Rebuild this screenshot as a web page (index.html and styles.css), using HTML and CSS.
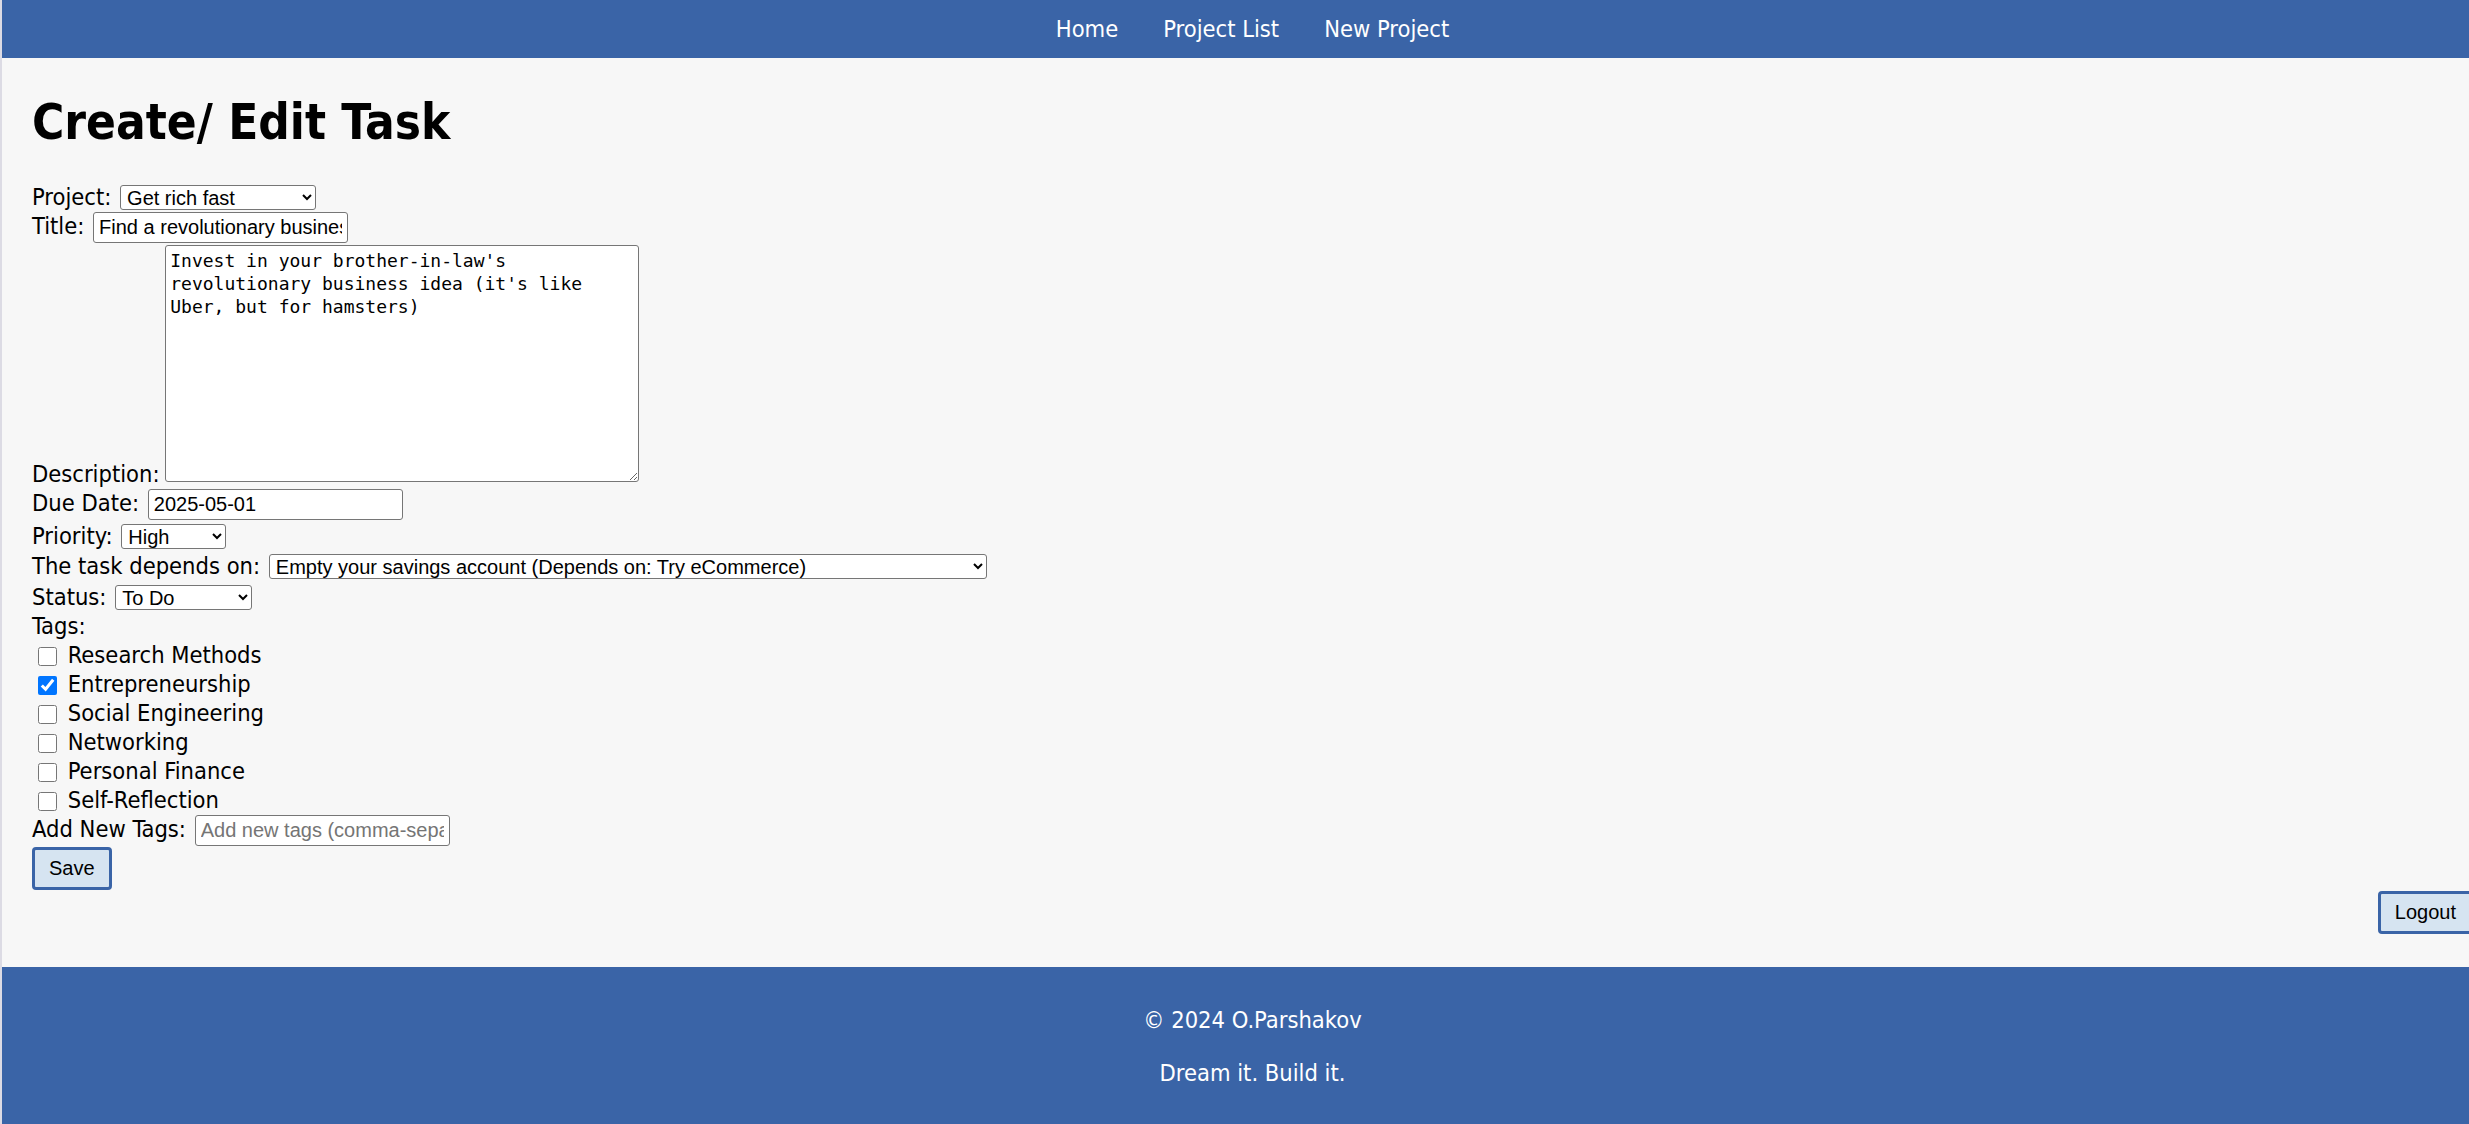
FILE: index.html
```html
<!DOCTYPE html>
<html lang="en">
<head>
<meta charset="utf-8">
<title>Create/ Edit Task</title>
<link rel="stylesheet" href="styles.css">
</head>
<body>
<div class="page">
  <header class="topbar">
    <nav>
      <ul class="nav">
        <li><a href="#">Home</a></li>
        <li><a href="#">Project List</a></li>
        <li><a href="#">New Project</a></li>
      </ul>
    </nav>
  </header>

  <main class="content">
    <h1 class="title">Create/ Edit Task</h1>
    <form class="task-form">
      <div class="row">
        <label>Project:</label>
        <select class="sel sel-project"><option>Get rich fast</option></select>
      </div>
      <div class="row">
        <label>Title:</label>
        <input class="field" type="text" value="Find a revolutionary business idea">
      </div>
      <div class="row">
        <label class="tight">Description:</label>
        <textarea class="desc">Invest in your brother-in-law's revolutionary business idea (it's like Uber, but for hamsters)</textarea>
      </div>
      <div class="row spaced">
        <label>Due Date:</label>
        <input class="field" type="text" value="2025-05-01">
      </div>
      <div class="row spaced">
        <label>Priority:</label>
        <select class="sel sel-priority"><option>High</option></select>
      </div>
      <div class="row spaced">
        <label>The task depends on:</label>
        <select class="sel sel-depends"><option>Empty your savings account (Depends on: Try eCommerce)</option></select>
      </div>
      <div class="row">
        <label>Status:</label>
        <select class="sel sel-status"><option>To Do</option></select>
      </div>
      <div class="row">Tags:</div>
      <div class="row"><input class="check" type="checkbox"> Research Methods</div>
      <div class="row"><input class="check" type="checkbox" checked> Entrepreneurship</div>
      <div class="row"><input class="check" type="checkbox"> Social Engineering</div>
      <div class="row"><input class="check" type="checkbox"> Networking</div>
      <div class="row"><input class="check" type="checkbox"> Personal Finance</div>
      <div class="row"><input class="check" type="checkbox"> Self-Reflection</div>
      <div class="row">
        <label>Add New Tags:</label>
        <input class="field" type="text" placeholder="Add new tags (comma-separated)">
      </div>
      <button class="btn" type="button">Save</button>
    </form>
    <div class="logout-wrap">
      <button class="btn" type="button">Logout</button>
    </div>
  </main>

  <footer class="footer">
    <p>&copy; 2024 O.Parshakov</p>
    <p>Dream it. Build it.</p>
  </footer>
</div>
</body>
</html>
```

FILE: styles.css
```css
html, body {
  margin: 0;
  padding: 0;
  background: #f7f7f7;
  overflow: hidden;
}

.page {
  box-sizing: border-box;
  width: 2503px;
  border-left: 2px solid #dcdbe4;
  font-family: "DejaVu Sans Condensed", "DejaVu Sans", sans-serif;
  font-size: 23.5px;
  color: #000;
}

.topbar {
  background: #3a64a7;
  height: 58px;
  display: flex;
  align-items: center;
  justify-content: center;
}

.nav {
  list-style: none;
  margin: 0;
  padding: 0;
  display: flex;
  gap: 45px;
  line-height: 29px;
}

.nav a {
  color: #fff;
  text-decoration: none;
}

.content {
  padding: 37px 30px 33px;
}

.title {
  margin: 0 0 32px;
  font-size: 49px;
  font-weight: bold;
  line-height: 56px;
}

.row {
  line-height: 29px;
}

.row label {
  margin-right: 2px;
}

.row label.tight {
  margin-right: -1px;
}

.row.spaced {
  padding-bottom: 1.5px;
}

.sel {
  font: 20px "Liberation Sans", Arial, sans-serif;
  height: 25px;
  box-sizing: border-box;
  border: 1px solid #767676;
  border-radius: 3px;
  background: #fff;
  color: #000;
  padding: 0 2px;
  margin: 0;
}

.sel-project { width: 196px; }
.sel-priority { width: 105px; }
.sel-depends { width: 718px; }
.sel-status { width: 137px; }

.field {
  font: 20px "Liberation Sans", Arial, sans-serif;
  width: 255px;
  height: 31px;
  box-sizing: border-box;
  border: 1px solid #767676;
  border-radius: 3px;
  background: #fff;
  color: #000;
  padding: 1px 5px;
  margin: 0;
}

.field::placeholder {
  color: #757575;
}

.desc {
  font: 18px "DejaVu Sans Mono", monospace;
  line-height: 23px;
  width: 474px;
  height: 237px;
  box-sizing: border-box;
  border: 1px solid #767676;
  border-radius: 3px;
  background: #fff;
  color: #000;
  padding: 3px 4px;
  margin: 2px 0 0;
  resize: both;
}

.check {
  width: 19px;
  height: 19px;
  margin: 4px 4px 4px 6px;
  vertical-align: middle;
}

.btn {
  display: block;
  font: 20px "Liberation Sans", Arial, sans-serif;
  line-height: 24px;
  padding: 6.5px 14px;
  background: #d6e4f1;
  border: 3px solid #3a64a7;
  border-radius: 4px;
  color: #000;
  margin: 1px 0 0;
}

.logout-wrap {
  display: flex;
  justify-content: flex-end;
}

.logout-wrap .btn {
  margin: 1px 0 0;
}

.footer {
  background: #3a64a7;
  color: #fff;
  text-align: center;
  padding: 15px 0 14px;
  line-height: 29px;
}

.footer p {
  margin: 24px 0;
}
```
